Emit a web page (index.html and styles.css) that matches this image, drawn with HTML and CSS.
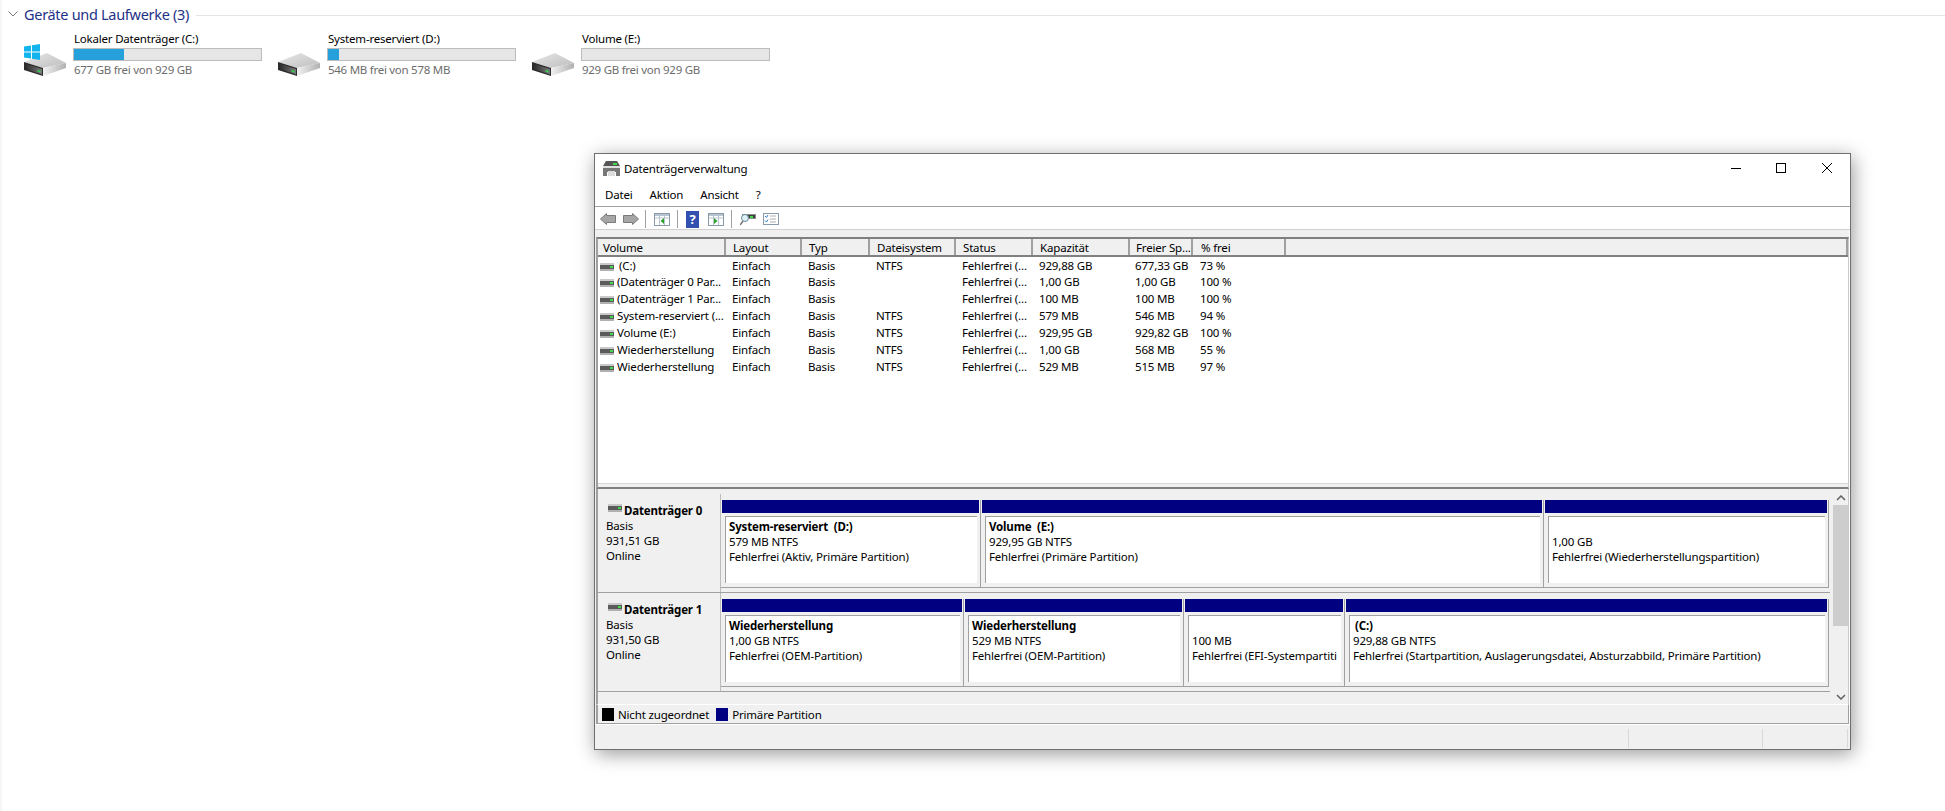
FILE: index.html
```html
<!DOCTYPE html>
<html lang="de">
<head>
<meta charset="utf-8">
<title>Datenträgerverwaltung</title>
<link rel="stylesheet" href="styles.css">
</head>
<body>
<svg class="defs" width="0" height="0" aria-hidden="true">
  <defs>
    <linearGradient id="dtop" x1="0" y1="0" x2="1" y2="1"><stop offset="0" stop-color="#e8e8e8"/><stop offset="1" stop-color="#bdbdbd"/></linearGradient>
    <linearGradient id="dside" x1="0" y1="0" x2="1" y2="0"><stop offset="0" stop-color="#f2f2f2"/><stop offset="1" stop-color="#b0b0b0"/></linearGradient>
    <linearGradient id="dwin" x1="0" y1="0" x2="1" y2="0"><stop offset="0" stop-color="#2e2e2e"/><stop offset="1" stop-color="#7a7a7a"/></linearGradient>
    <symbol id="bigdrive" viewBox="0 0 42 23">
      <path d="M0 9 23 0 42 10 19 15Z" fill="url(#dtop)"/>
      <path d="M19 15 42 10V15L19 23Z" fill="url(#dside)"/>
      <path d="M0 9 19 15V23L0 17Z" fill="#2b2b2b"/>
      <path d="M2 11 18 16V21.500L2 16Z" fill="url(#dwin)"/>
      <path d="M13.500 17 16.500 17.800V19.500L13.500 18.700Z" fill="#2bd34c"/>
    </symbol>
    <symbol id="smalldrive" viewBox="0 0 14 8">
      <rect x="0" y="0" width="14" height="2" fill="#c9c9c9"/>
      <rect x="0" y="2" width="14" height="4" fill="#5a5a5a"/>
      <rect x="10" y="3" width="3" height="2" fill="#3ddc4a"/>
      <rect x="0" y="6" width="14" height="2" fill="#b0b0b0"/>
    </symbol>
  </defs>
</svg>

<section class="group">
  <header class="group-head">
    <svg class="chev" viewBox="0 0 10 6" width="10" height="6"><path d="M.5.5 5 5 9.500.5" fill="none" stroke="#7a7a7a"/></svg>
    <h2 class="group-title">Geräte und Laufwerke (3)</h2>
    <span class="group-line"></span>
  </header>
  <div class="drives">
    <article class="drive">
      <div class="drive-icon">
        <svg class="winlogo" viewBox="0 0 16 16" width="16" height="16"><path d="M0 2.500 7 1.500V7.500H0ZM8 1.300 16 0V7.500H8ZM0 8.500H7V14.500L0 13.500ZM8 8.500H16V16L8 14.700Z" fill="#12b4ee"/></svg>
        <svg class="hdd" width="42" height="23"><use href="#bigdrive"/></svg>
      </div>
      <div class="drive-info">
        <div class="drive-name">Lokaler Datenträger (C:)</div>
        <div class="meter"><div class="meter-fill" style="width:27%"></div></div>
        <div class="drive-free">677 GB frei von 929 GB</div>
      </div>
    </article>
    <article class="drive">
      <div class="drive-icon">
        <svg class="hdd" width="42" height="23"><use href="#bigdrive"/></svg>
      </div>
      <div class="drive-info">
        <div class="drive-name">System-reserviert (D:)</div>
        <div class="meter"><div class="meter-fill" style="width:6%"></div></div>
        <div class="drive-free">546 MB frei von 578 MB</div>
      </div>
    </article>
    <article class="drive">
      <div class="drive-icon">
        <svg class="hdd" width="42" height="23"><use href="#bigdrive"/></svg>
      </div>
      <div class="drive-info">
        <div class="drive-name">Volume (E:)</div>
        <div class="meter"></div>
        <div class="drive-free">929 GB frei von 929 GB</div>
      </div>
    </article>
  </div>
</section>

<main class="window">
  <div class="titlebar">
    <svg class="appicon" viewBox="0 0 17 15" width="17" height="15">
      <path d="M3 0H14L17 5H0Z" fill="#555"/><rect x="10" y="2" width="4" height="2" fill="#3ddc4a"/>
      <rect y="5" width="17" height="2" fill="#e0e0e0"/>
      <path d="M0 7H17V15H13V11H4V15H0Z" fill="#777"/><rect x="5" y="10" width="7" height="5" fill="#ddd"/>
    </svg>
    <span class="title">Datenträgerverwaltung</span>
    <div class="winbtns">
      <svg viewBox="0 0 10 10" width="10" height="10"><path d="M0 5.500H10" stroke="#000" fill="none"/></svg>
      <svg viewBox="0 0 10 10" width="10" height="10"><rect x=".5" y=".5" width="9" height="9" stroke="#000" fill="none"/></svg>
      <svg viewBox="0 0 10 10" width="10" height="10"><path d="M0 0 10 10M10 0 0 10" stroke="#000" stroke-width="1" fill="none"/></svg>
    </div>
  </div>
  <nav class="menubar"><span>Datei</span><span>Aktion</span><span>Ansicht</span><span>?</span></nav>
  <div class="toolbar">
    <svg viewBox="0 0 16 12" width="16" height="12"><path d="M.5 6 6.500.5V2.500H15.500V9.500H6.500V11.500Z" fill="#a6a6a6" stroke="#7a7a7a"/></svg>
    <svg class="tb-next" viewBox="0 0 16 12" width="16" height="12"><path d="M15.500 6 9.500.5V2.500H.5V9.500H9.500V11.500Z" fill="#a6a6a6" stroke="#7a7a7a"/></svg>
    <i class="tb-sep"></i>
    <svg viewBox="0 0 16 13" width="16" height="13"><rect x=".5" y=".5" width="15" height="12" fill="#fff" stroke="#8a9aa8"/><path d="M1 1H15V3H1Z" fill="#b8c4d0"/><path d="M1 5H15M5.500 3V12M10.500 3V12" stroke="#b8c4d0"/><path d="M10 5 6.500 8 10 11Z" fill="#2ea02e"/></svg>
    <i class="tb-sep"></i>
    <span class="help">?</span>
    <svg viewBox="0 0 16 13" width="16" height="13"><rect x=".5" y=".5" width="15" height="12" fill="#fff" stroke="#8a9aa8"/><path d="M1 1H15V3H1Z" fill="#b8c4d0"/><path d="M1 5H15M5.500 3V12M10.500 3V12" stroke="#b8c4d0"/><path d="M6 5 9.500 8 6 11Z" fill="#2ea02e"/></svg>
    <i class="tb-sep"></i>
    <svg viewBox="0 0 16 13" width="16" height="13"><rect x="2" y="1" width="14" height="5" fill="#8f8f8f"/><rect x="3" y="2" width="12" height="3" fill="#3c3c3c"/><rect x="10" y="3" width="3" height="2" fill="#3ddc4a"/><circle cx="5" cy="5" r="3.500" fill="#dff1f7" stroke="#6b8a9a"/><path d="M3 8 0 12" stroke="#777" stroke-width="1.500"/></svg>
    <svg viewBox="0 0 16 12" width="16" height="12"><rect x=".5" y=".5" width="15" height="11" fill="#fff" stroke="#8a9aa8"/><path d="M2 3 3.500 4.500 5 2M2 7.500 3.500 9 5 6.500" stroke="#2e7fd0" fill="none"/><path d="M7 3H13M7 6H13M7 9H13" stroke="#b0b0b0"/></svg>
  </div>
  <div class="content">
    <div class="list">
      <table class="volumes">
        <colgroup><col class="c1"><col class="c2"><col class="c3"><col class="c4"><col class="c5"><col class="c6"><col class="c7"><col class="c8"><col></colgroup>
        <thead>
          <tr><th>Volume</th><th>Layout</th><th>Typ</th><th>Dateisystem</th><th>Status</th><th>Kapazität</th><th>Freier Sp...</th><th>% frei</th><th></th></tr>
        </thead>
        <tbody>
          <tr><td class="vol"><svg width="14" height="8"><use href="#smalldrive"/></svg><span class="indent">(C:)</span></td><td>Einfach</td><td>Basis</td><td>NTFS</td><td>Fehlerfrei (...</td><td>929,88 GB</td><td>677,33 GB</td><td>73 %</td><td></td></tr>
          <tr><td class="vol"><svg width="14" height="8"><use href="#smalldrive"/></svg><span>(Datenträger 0 Par...</span></td><td>Einfach</td><td>Basis</td><td></td><td>Fehlerfrei (...</td><td>1,00 GB</td><td>1,00 GB</td><td>100 %</td><td></td></tr>
          <tr><td class="vol"><svg width="14" height="8"><use href="#smalldrive"/></svg><span>(Datenträger 1 Par...</span></td><td>Einfach</td><td>Basis</td><td></td><td>Fehlerfrei (...</td><td>100 MB</td><td>100 MB</td><td>100 %</td><td></td></tr>
          <tr><td class="vol"><svg width="14" height="8"><use href="#smalldrive"/></svg><span>System-reserviert (...</span></td><td>Einfach</td><td>Basis</td><td>NTFS</td><td>Fehlerfrei (...</td><td>579 MB</td><td>546 MB</td><td>94 %</td><td></td></tr>
          <tr><td class="vol"><svg width="14" height="8"><use href="#smalldrive"/></svg><span>Volume (E:)</span></td><td>Einfach</td><td>Basis</td><td>NTFS</td><td>Fehlerfrei (...</td><td>929,95 GB</td><td>929,82 GB</td><td>100 %</td><td></td></tr>
          <tr><td class="vol"><svg width="14" height="8"><use href="#smalldrive"/></svg><span>Wiederherstellung</span></td><td>Einfach</td><td>Basis</td><td>NTFS</td><td>Fehlerfrei (...</td><td>1,00 GB</td><td>568 MB</td><td>55 %</td><td></td></tr>
          <tr><td class="vol"><svg width="14" height="8"><use href="#smalldrive"/></svg><span>Wiederherstellung</span></td><td>Einfach</td><td>Basis</td><td>NTFS</td><td>Fehlerfrei (...</td><td>529 MB</td><td>515 MB</td><td>97 %</td><td></td></tr>
        </tbody>
      </table>
      <div class="list-hscroll"></div>
    </div>
    <div class="disks-area">
      <div class="disks">
        <div class="disk">
          <div class="disk-label">
            <div class="disk-name"><svg width="14" height="8"><use href="#smalldrive"/></svg><b>Datenträger 0</b></div>
            <div>Basis</div><div>931,51 GB</div><div>Online</div>
          </div>
          <div class="parts">
            <div class="part p-d0a"><div class="bar"></div><div class="box"><b>System-reserviert&nbsp; (D:)</b><span>579 MB NTFS</span><span>Fehlerfrei (Aktiv, Primäre Partition)</span></div></div>
            <div class="part p-d0b"><div class="bar"></div><div class="box"><b>Volume&nbsp; (E:)</b><span>929,95 GB NTFS</span><span>Fehlerfrei (Primäre Partition)</span></div></div>
            <div class="part p-d0c"><div class="bar"></div><div class="box"><b>&nbsp;</b><span>1,00 GB</span><span>Fehlerfrei (Wiederherstellungspartition)</span></div></div>
          </div>
        </div>
        <div class="disk">
          <div class="disk-label">
            <div class="disk-name"><svg width="14" height="8"><use href="#smalldrive"/></svg><b>Datenträger 1</b></div>
            <div>Basis</div><div>931,50 GB</div><div>Online</div>
          </div>
          <div class="parts">
            <div class="part p-d1a"><div class="bar"></div><div class="box"><b>Wiederherstellung</b><span>1,00 GB NTFS</span><span>Fehlerfrei (OEM-Partition)</span></div></div>
            <div class="part p-d1b"><div class="bar"></div><div class="box"><b>Wiederherstellung</b><span>529 MB NTFS</span><span>Fehlerfrei (OEM-Partition)</span></div></div>
            <div class="part p-d1c"><div class="bar"></div><div class="box"><b>&nbsp;</b><span>100 MB</span><span>Fehlerfrei (EFI-Systempartiti</span></div></div>
            <div class="part p-d1d"><div class="bar"></div><div class="box"><b class="indent">(C:)</b><span>929,88 GB NTFS</span><span>Fehlerfrei (Startpartition, Auslagerungsdatei, Absturzabbild, Primäre Partition)</span></div></div>
          </div>
        </div>
      </div>
      <div class="vscroll">
        <svg viewBox="0 0 10 6" width="10" height="6"><path d="M1 5 5 1 9 5" fill="none" stroke="#606060" stroke-width="1.500"/></svg>
        <div class="track"><div class="thumb"></div></div>
        <svg viewBox="0 0 10 6" width="10" height="6"><path d="M1 1 5 5 9 1" fill="none" stroke="#606060" stroke-width="1.500"/></svg>
      </div>
    </div>
    <div class="legend">
      <i class="swatch black"></i><span>Nicht zugeordnet</span>
      <i class="swatch navy"></i><span>Primäre Partition</span>
    </div>
  </div>
  <footer class="statusbar"><span></span><span class="st2"></span><span class="st3"></span></footer>
</main>
</body>
</html>
```

FILE: styles.css
```css
* { box-sizing: border-box; }
html, body { margin: 0; height: 100%; }
body {
  background: #fff;
  font: 11.500px/15px "Noto Sans", "Open Sans", sans-serif;
  letter-spacing: -.17px;
  color: #000;
  overflow: hidden;
  position: relative;
  border-left: 2px solid #f6f6f6;
}
.defs { position: absolute; }
b { font-weight: 700; }

/* Explorer group */
.group { padding: 4px 0 0 6px; }
.group-head { display: flex; align-items: center; height: 20px; }
.chev { margin-right: 6px; }
.group-title { margin: 0; font-size: 14.500px; font-weight: 400; color: #1e3287; line-height: 20px; white-space: nowrap; letter-spacing: -.3px; }
.group-line { flex: 1; height: 1px; background: #e5e5e5; margin: 2px 0 0 7px; }
.drives { display: flex; padding: 8px 0 0 16px; }
.drive { display: flex; width: 254px; }
.drive-icon { width: 42px; height: 44px; display: flex; flex-direction: column; justify-content: flex-end; align-items: flex-start; margin-right: 7px; }
.winlogo { margin-bottom: -7px; position: relative; z-index: 1; }
.hdd { display: block; flex: none; }
.drive-info { width: 189px; margin-top: -1px; }
.drive-name, .drive-free { padding-left: 1px; white-space: nowrap; }
.drive-name { height: 17px; line-height: 15px; letter-spacing: -.2px; }
.drive-free { color: #6d6d6d; margin-top: 1px; height: 15px; letter-spacing: -.27px; }
.meter { height: 13px; background: #e6e6e6; border: 1px solid #bcbcbc; }
.meter-fill { height: 100%; background: #26a0da; }

/* Window */
.window {
  position: absolute; left: 592px; top: 153px; width: 1257px; height: 597px;
  background: #fff; border: 1px solid #6f6f6f;
  box-shadow: 2px 4px 18px rgba(0,0,0,.4);
  display: flex; flex-direction: column;
}
.titlebar { height: 29px; flex: none; display: flex; align-items: center; padding: 0 0 0 8px; }
.appicon { margin-right: 4px; }
.title { flex: 1; }
.winbtns { display: flex; gap: 35px; padding-right: 18px; margin-top: -1px; }
.winbtns svg { display: block; }
.winbtns svg:last-child { margin-left: 1px; }
.menubar { height: 23px; flex: none; display: flex; gap: 17px; align-items: center; padding: 0 0 0 10px; }
.toolbar { height: 24px; flex: none; display: flex; align-items: center; padding: 2px 0 0 5px; border-top: 1px solid #a0a0a0; border-bottom: 1px solid #d0d0d0; }
.toolbar svg { margin-right: 7px; flex: none; }
.toolbar .tb-next { margin-right: 6px; }
.tb-sep { width: 1px; height: 18px; background: #a0a0a0; margin-right: 8px; flex: none; }
.help { width: 13px; height: 17px; margin-right: 9px; background: #3150b0; color: #fff; font-weight: 700; font-size: 13px; line-height: 17px; text-align: center; flex: none; }

.content { flex: 1; display: flex; flex-direction: column; background: #f0f0f0; padding: 7px 0 0 1px; border-right: 1px solid #fff; min-height: 0; }
.list { height: 252px; flex: none; display: flex; flex-direction: column; justify-content: space-between; background: #fff; border-left: 2px solid #a0a0a0; border-top: 2px solid #808080; border-right: 1px solid #c8c8c8; border-bottom: 2px solid #808080; }
.volumes { border-collapse: collapse; table-layout: fixed; width: 100%; }
.c1 { width: 127px; } .c2 { width: 76px; } .c3 { width: 68px; } .c4 { width: 86px; } .c5 { width: 77px; } .c6 { width: 97px; } .c7 { width: 63px; } .c8 { width: 93px; }
.volumes th { height: 17px; padding: 0 0 0 7px; background: #f0f0f0; border-right: 2px solid #a0a0a0; border-bottom: 2px solid #808080; font-weight: 400; text-align: left; white-space: nowrap; }
.volumes th:first-child { padding-left: 5px; }
.volumes td { height: 17px; padding: 0 0 0 7px; white-space: nowrap; }
.volumes td.vol { padding-left: 2px; }
.volumes th:nth-child(7), .volumes td:nth-child(7) { padding-left: 6px; }
.volumes th:nth-child(8), .volumes td:nth-child(8) { padding-left: 8px; }
.vol svg { vertical-align: -1px; margin-right: 3px; }
.indent { padding-left: 2px; }
.list-hscroll { height: 4px; flex: none; background: #f0f0f0; border-top: 1px solid #d8d8d8; }
.disks-area { flex: 1; display: flex; background: #f0f0f0; border-left: 2px solid #a0a0a0; border-right: 1px solid #c8c8c8; min-height: 0; }
.disks { flex: 1; padding-top: 5px; min-width: 0; }
.disk { display: flex; height: 99px; border-bottom: 1px solid #a0a0a0; }
.disk-label { width: 123px; flex: none; padding: 8px 0 0 8px; border-right: 1px solid #bcbcbc; }
.disk-name { display: flex; align-items: center; height: 16px; }
.disk-name svg { margin: 0 2px 4px 2px; }
.parts { display: flex; padding-top: 6px; height: 94px; }
.part { padding: 0 1px; border-right: 1px solid #a0a0a0; border-bottom: 1px solid #a0a0a0; height: 88px; flex: none; }
.bar { height: 13px; background: #000080; }
.box { height: 67px; margin: 3px 2px 4px 3px; background: #fff; border-top: 1px solid #a0a0a0; border-left: 1px solid #a0a0a0; padding: 2px 0 0 3px; display: flex; flex-direction: column; white-space: nowrap; overflow: hidden; }
.box b { display: block; }
.p-d0a { width: 260px; } .p-d0b { width: 563px; } .p-d0c { width: 285px; }
.p-d1a { width: 243px; } .p-d1b { width: 220px; } .p-d1c { width: 161px; } .p-d1d { width: 484px; }
.vscroll { width: 15px; margin: 3px 0 0 3px; display: flex; flex-direction: column; align-items: center; flex: none; }
.vscroll svg { flex: none; margin: 3px 0 4px; }
.track { flex: 1; width: 15px; }
.thumb { height: 121px; background: #cdcdcd; }
.legend { height: 20px; flex: none; display: flex; align-items: center; background: #f0f0f0; border-left: 2px solid #a0a0a0; border-top: 1px solid #fff; border-right: 1px solid #a0a0a0; border-bottom: 1px solid #a0a0a0; padding-left: 4px; }
.swatch { width: 12px; height: 13px; margin-right: 4px; flex: none; }
.swatch.black { background: #000; }
.swatch.navy { background: #000080; margin-left: 7px; margin-right: 4px; }
.statusbar { height: 25px; flex: none; background: #f0f0f0; display: flex; padding: 4px 2px 1px 0; border-top: 1px solid #fff; }
.statusbar span { border-right: 1px solid #d9d9d9; }
.statusbar span:first-child { width: 1035px; }
.statusbar .st2 { width: 134px; }
.statusbar .st3 { width: 85px; }
```
